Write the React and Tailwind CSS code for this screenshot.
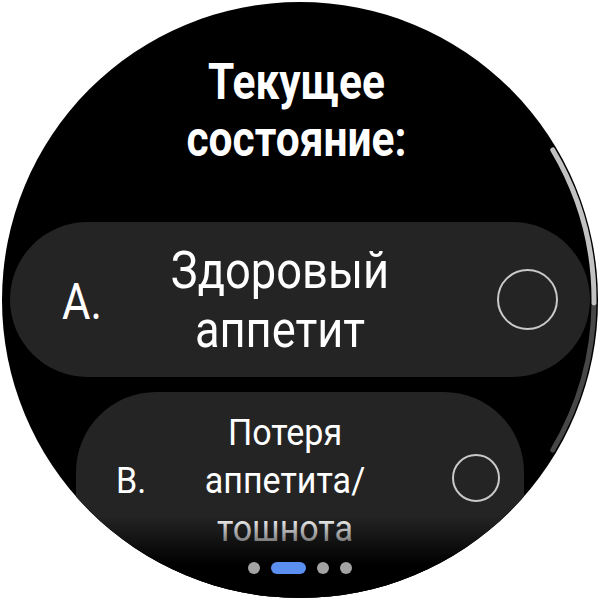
const FONT = { fontFamily: 'Roboto, "Noto Sans", sans-serif' };

function Radio({ size }) {
  return (
    <div
      className="rounded-full border-[2.5px] border-[#c9c9c9] shrink-0"
      style={{ width: size, height: size }}
    />
  );
}

function ScrollIndicator() {
  return (
    <svg className="absolute inset-0 pointer-events-none" width="596" height="596" viewBox="0 0 596 596">
      <path d="M592 301 A294 294 0 0 1 550.8 448" stroke="#474747" strokeWidth="5" fill="none" strokeLinecap="round" />
      <path d="M550.8 148 A294 294 0 0 1 592 301" stroke="#c2c2c2" strokeWidth="5" fill="none" strokeLinecap="round" />
    </svg>
  );
}

function PageDots() {
  return (
    <div className="absolute bottom-[24px] left-0 right-0 flex justify-center items-center gap-[11px]">
      <span className="w-[12px] h-[12px] rounded-full bg-[#a3a3a3]" />
      <span className="w-[35px] h-[12px] rounded-full bg-[#5a8ff0]" />
      <span className="w-[12px] h-[12px] rounded-full bg-[#a3a3a3]" />
      <span className="w-[12px] h-[12px] rounded-full bg-[#a3a3a3]" />
    </div>
  );
}

export default function App() {
  return (
    <div className="w-[600px] h-[600px] bg-white flex items-center justify-center" style={FONT}>
      <div className="relative w-[596px] h-[596px] rounded-full bg-black overflow-hidden">
        <div className="flex flex-col items-center pt-[52px]">
          <h1 className="text-white font-bold text-[50px] leading-[57px] text-center -ml-[8px] scale-x-[0.85]">
            Текущее<br />состояние:
          </h1>

          {/* option A */}
          <div className="mt-[54px] w-[580px] h-[155px] shrink-0 rounded-full bg-[#242424] flex items-center pl-[52px] text-white">
            <span className="w-[44px] mt-[4px] text-[50px] leading-none scale-x-[0.87] origin-left">А.</span>
            <div className="w-[348px] text-center text-[52px] leading-[59px] scale-x-[0.87]">
              Здоровый<br />аппетит
            </div>
            <div className="ml-[43px]">
              <Radio size={61} />
            </div>
          </div>

          {/* option B */}
          <div className="mt-[15px] w-[448px] h-[240px] shrink-0 rounded-[80px] bg-[#242424] flex items-start pt-[17px] pl-[40px] text-white">
            <span className="w-[40px] mt-[53px] text-[37px] leading-none scale-x-[0.92] origin-left">В.</span>
            <div className="w-[258px] text-center text-[37px] leading-[48px] scale-x-[0.92]">
              Потеря<br />аппетита/<br />тошнота
            </div>
            <div className="ml-[38px] mt-[45px]">
              <Radio size={48} />
            </div>
          </div>
        </div>

        <div className="absolute left-0 right-0 bottom-0 h-[82px] bg-linear-to-b from-transparent to-black to-60%" />
        <PageDots />
        <ScrollIndicator />
      </div>
    </div>
  );
}
